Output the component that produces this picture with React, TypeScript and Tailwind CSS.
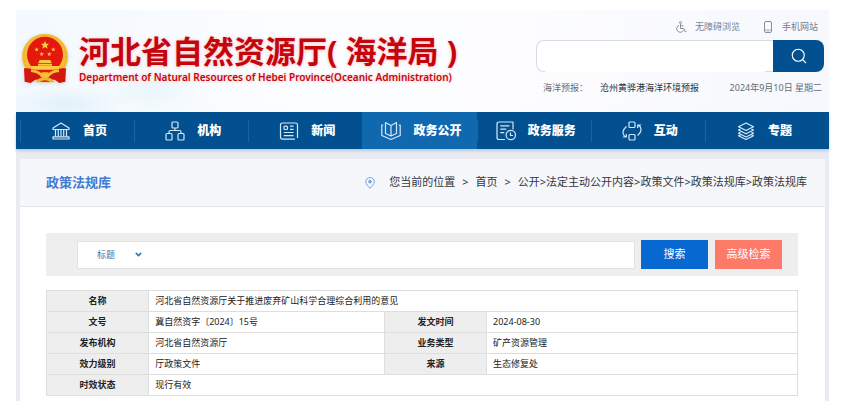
import type { ReactNode } from "react";
import { ChevronDown, Search } from "lucide-react";
import { clsx } from "clsx";

interface NavItem {
  label: string;
  icon: ReactNode;
  active?: boolean;
}

const navItems: NavItem[] = [
  {
    label: "首页",
    icon: (
      <>
        <path d="M2 8.500V7L10 2l8 5v1.500z" />
        <path d="M4.500 8.500v7M7.300 8.500v7M10 8.500v7M12.700 8.500v7M15.500 8.500v7" />
        <path d="M2 15.800h16V18H2z" />
      </>
    ),
  },
  {
    label: "机构",
    icon: (
      <>
        <rect x="7" y="1" width="6" height="6" rx="1" />
        <rect x="1" y="12.500" width="6" height="6.500" rx="1" />
        <rect x="13" y="12.500" width="6" height="6.500" rx="1" />
        <path d="M10 7v2.500M4 12.500v-1.500q0-1.500 1.500-1.500h9q1.500 0 1.500 1.500v1.500" />
      </>
    ),
  },
  {
    label: "新闻",
    icon: (
      <>
        <path d="M16 18.200H3.500Q1.500 18.200 1.500 16V4Q1.500 2 3.500 2h13q2 0 2 2V17" />
        <rect x="5" y="5.200" width="3.500" height="3.300" rx="1" />
        <path d="M11 5.200h3.500M11 8.300h3.500M4.800 11.500h9.700M4.800 14.600h9.700" />
      </>
    ),
  },
  {
    label: "政务公开",
    active: true,
    icon: (
      <>
        <path d="M10 4.500v10.500L4.500 12.500V1.500zM10 4.500l5.500-3V12.500L10 15z" />
        <path d="M2.300 4H.8v10.500L10 18.500l9.200-4V4h-1.500" />
      </>
    ),
  },
  {
    label: "政务服务",
    icon: (
      <>
        <path d="M9 18.500H3Q1 18.500 1 16.500V3Q1 1 3 1h14v7.500" />
        <path d="M4.300 4.800h9.200M4.300 8.200h6M4.300 11.600h4" />
        <circle cx="14.800" cy="14" r="4.700" />
        <path d="M14.500 11.500v3h2.500" />
      </>
    ),
  },
  {
    label: "互动",
    icon: (
      <>
        <rect x="7" y="1" width="6" height="5.500" rx="1" />
        <rect x="7" y="13.500" width="6" height="5.500" rx="1" />
        <path d="M4.500 5.500Q.8 8.500 1 12q.2 2.500 2.500 3.800M.8 16h3.500v-3" />
        <path d="M15.500 14.500q3.700-3 3.500-6.500-.2-2.500-2.500-3.800M19.200 4h-3.500v3" />
      </>
    ),
  },
  {
    label: "专题",
    icon: (
      <>
        <path d="M10 2l7.500 3.700L10 9.500 2.500 5.700z" />
        <path d="M4.500 8L2.500 9l7.500 3.800L17.500 9l-2-1M4.500 11.200l-2 1 7.500 3.800 7.500-3.800-2-1M4.500 14l-2 .8L10 18.500l7.500-3.700-2-.8" />
      </>
    ),
  },
];

const crumbs = ["公开", "法定主动公开内容", "政策文件", "政策法规库", "政策法规库"];

const records = [
  ["文号", "冀自然资字〔2024〕15号", "发文时间", "2024-08-30"],
  ["发布机构", "河北省自然资源厅", "业务类型", "矿产资源管理"],
  ["效力级别", "厅政策文件", "来源", "生态修复处"],
];

function Emblem() {
  return (
    <svg viewBox="32 36 144 156" className="h-[52px] w-12 shrink-0 drop-shadow-sm" aria-hidden="true">
      <circle cx="104" cy="107" r="69" fill="#f3bd35" />
      <circle cx="104" cy="107" r="63" fill="none" stroke="#e3a127" strokeWidth="2" strokeDasharray="5 5" />
      <circle cx="104" cy="101" r="54" fill="#e5180e" />
      <path d="M104 59l3.500 9h9l-7 6 2.500 9-8-5-8 5 2.500-9-7-6h9z" fill="#ffd04a" />
      <g fill="#f9c13f">
        <path d="M79 79l2 4h5l-4 3 1 5-4-2-4 2 1-5-4-3h5zM129 79l2 4h5l-4 3 1 5-4-2-4 2 1-5-4-3h5z" />
        <path d="M94 93l2 4h5l-4 3 1 5-4-2-4 2 1-5-4-3h5zM117 93l2 4h5l-4 3 1 5-4-2-4 2 1-5-4-3h5z" />
      </g>
      <path d="M88 117h32l4 9h-40zM83 128h42v6H83zM62 135h84v11H62z" fill="#ffc944" />
      <path d="M54 142l26 6 24 12 24-12 26-6 13 0-2 40-18 4-14-10H75l-14 10-18-4-2-40z" fill="#d3170e" />
      <path d="M62 149q20 1 33 15M146 149q-20 1-33 15" fill="none" stroke="#f5bf3a" strokeWidth="8" />
      <ellipse cx="104" cy="163" rx="14" ry="9" fill="#f5bf3a" />
      <path d="M76 184q4-12 18-14h20q14 2 18 14z" fill="#f0b535" />
      <path d="M88 182q16-9 32 0z" fill="#d3170e" />
    </svg>
  );
}

function Header() {
  return (
    <header className="flex h-[102px] items-start justify-between bg-[radial-gradient(ellipse_60px_18px_at_50px_94px,#e0f1fb,transparent),radial-gradient(ellipse_50px_24px_at_135px_80px,#e9f5fc,transparent),linear-gradient(90deg,#f3f9fe,#fcfdff_35%,#fdfdff_60%,#f6f8fd)] pl-[5px]">
      <div className="flex items-start pt-[23px]">
        <Emblem />
        <div className="ml-[10px] text-[#c4060c] [text-shadow:0_0_3px_#fbc5c8,0_1px_4px_#fde0e2]">
          <h1 className="text-[31px] leading-9 font-bold whitespace-nowrap">河北省自然资源厅( 海洋局 )</h1>
          <p className="text-[10px] leading-4 font-semibold whitespace-nowrap">
            Department of Natural Resources of Hebei Province(Oceanic Administration)
          </p>
        </div>
      </div>

      <div className="w-[293px] shrink-0 pt-2 pr-[5px]">
        <div className="flex h-[18px] items-center justify-end gap-6 pr-[6px] text-[9px] text-[#787f92]">
          <a href="#accessible" className="flex items-center gap-2">
            <svg viewBox="0 0 12 12" className="size-3" fill="none" stroke="#868c9c" aria-hidden="true">
              <circle cx="5.500" cy="1.500" r="1" />
              <path d="M5.500 2.800v4.700h3.300l1.500 3.300 1.200-.5M5.500 4.800h3M4 4.300a3.600 3.600 0 1 0 4.500 5" />
            </svg>
            无障碍浏览
          </a>
          <a href="#mobile" className="flex items-center gap-[10px]">
            <svg viewBox="0 0 8 12" className="h-3 w-2" fill="none" stroke="#868c9c" aria-hidden="true">
              <rect x=".5" y=".5" width="7" height="11" rx="1.500" />
              <path d="M.5 9h7M3.300 10.300h1.400" strokeWidth=".7" />
            </svg>
            手机网站
          </a>
        </div>
        <form className="mt-1 flex h-8">
          <div className="flex flex-1 rounded-l-lg border border-r-0 border-[#d9dce2] bg-white">
            <input
              type="search"
              aria-label="站内搜索"
              className="mr-2 -mb-px ml-2 w-full bg-white text-xs outline-none"
            />
          </div>
          <button
            type="button"
            aria-label="搜索"
            className="flex w-[51px] items-center justify-center rounded-r-lg bg-[#02508f] text-white"
          >
            <Search className="size-[18px]" strokeWidth={1.5} />
          </button>
        </form>
        <div className="mt-2 flex pr-[2px] pl-[7px] text-[9px] leading-4 text-[#666b78]">
          <span className="mr-3">海洋预报：</span>
          <a href="#forecast" className="text-[#2b2e36]">
            沧州黄骅港海洋环境预报
          </a>
          <span className="ml-auto">2024年9月10日 星期二</span>
        </div>
      </div>
    </header>
  );
}

function MainNav() {
  return (
    <nav className="relative flex h-[37px] bg-[#02508f] pr-[10px] pl-1 shadow-[0_2px_3px_#b9cae6]">
      {navItems.map((item) => (
        <a
          key={item.label}
          href="#nav"
          className={clsx(
            "flex flex-1 items-center justify-center gap-3 pl-1 text-xs font-black text-white",
            item.active
              ? "bg-[#1068ae]"
              : "bg-[linear-gradient(#1d639c,#1d639c)] bg-[length:1px_22px] bg-left bg-no-repeat",
          )}
        >
          <svg
            viewBox="0 0 20 20"
            className="size-5 shrink-0"
            fill="none"
            stroke="#d6e8f8"
            strokeWidth="1.2"
            strokeLinejoin="round"
            aria-hidden="true"
          >
            {item.icon}
          </svg>
          {item.label}
        </a>
      ))}
    </nav>
  );
}

function Breadcrumb() {
  return (
    <div className="flex items-center text-[11px] whitespace-pre text-[#33363d]">
      <svg viewBox="0 0 10 12" className="mr-[14px] h-3 w-[10px]" fill="none" stroke="#6ea3e2" aria-hidden="true">
        <path d="M5 11.300C2.500 8.500.7 6.800.7 4.700a4.300 4.100 0 0 1 8.600 0C9.300 6.800 7.500 8.500 5 11.300z" />
        <circle cx="5" cy="4.700" r="1.300" fill="#6ea3e2" />
      </svg>
      <span>您当前的位置</span>
      <span className="px-[7px]">&gt;</span>
      <a href="#home">首页</a>
      <span className="px-[7px]">&gt;</span>
      {crumbs.map((crumb, i) => (
        <span key={i}>
          {i > 0 && ">"}
          <a href="#crumb">{crumb}</a>
        </span>
      ))}
    </div>
  );
}

function SearchBar() {
  return (
    <form className="flex h-[43px] items-center bg-[#eeeeee] pr-4 pl-[31px]">
      <div className="flex h-7 flex-1 items-center border border-[#e2e2e2] bg-white pl-[19px]">
        <div className="relative flex items-center">
          <select
            aria-label="检索字段"
            className="w-[50px] appearance-none bg-transparent text-[9px] text-[#2f7ab5] outline-none"
          >
            <option>标题</option>
          </select>
          <ChevronDown className="pointer-events-none absolute right-1 size-[9px] text-[#2176b5]" strokeWidth={4} />
        </div>
        <input type="text" aria-label="关键词" className="h-full min-w-0 flex-1 text-xs outline-none" />
      </div>
      <button type="button" className="ml-[6px] h-[29px] w-[67px] bg-[#0868d2] text-[11px] text-white">
        搜索
      </button>
      <button type="button" className="ml-[7px] h-[29px] w-[67px] bg-[#fc7a67] text-[11px] text-white">
        高级检索
      </button>
    </form>
  );
}

const thClass = "border border-[#dedede] bg-[#eeeeee] text-center font-bold";
const tdClass = "border border-[#dedede] px-[6px]";

function RecordTable() {
  return (
    <table className="mt-[14px] w-full table-fixed border-collapse text-[9px] leading-5 text-[#222222]">
      <colgroup>
        <col className="w-[13.6%]" />
        <col className="w-[31.4%]" />
        <col className="w-[13.6%]" />
        <col />
      </colgroup>
      <tbody>
        <tr>
          <th scope="row" className={thClass}>名称</th>
          <td colSpan={3} className={tdClass}>
            河北省自然资源厅关于推进废弃矿山科学合理综合利用的意见
          </td>
        </tr>
        {records.map(([leftLabel, leftValue, rightLabel, rightValue]) => (
          <tr key={leftLabel}>
            <th scope="row" className={thClass}>{leftLabel}</th>
            <td className={tdClass}>{leftValue}</td>
            <th scope="row" className={thClass}>{rightLabel}</th>
            <td className={tdClass}>{rightValue}</td>
          </tr>
        ))}
        <tr>
          <th scope="row" className={thClass}>时效状态</th>
          <td colSpan={3} className={tdClass}>现行有效</td>
        </tr>
      </tbody>
    </table>
  );
}

export default function App() {
  return (
    <div className="bg-white pt-[10px] pr-[15px] pb-[14px] pl-4 font-['Noto_Sans','Noto_Sans_CJK_SC',sans-serif]">
      <Header />
      <MainNav />
      <main className="bg-[#eaebf0] px-1 pt-[10px]">
        <section className="bg-white">
          <div className="flex h-12 items-center justify-between border-b border-[#e3e4e8] bg-[#f6f7fa] pr-[18px] pl-[26px]">
            <h2 className="text-[13px] font-bold text-[#447bd0]">政策法规库</h2>
            <Breadcrumb />
          </div>
          <div className="pt-[26px] pr-[27px] pb-[5px] pl-[26px]">
            <SearchBar />
            <RecordTable />
          </div>
        </section>
      </main>
    </div>
  );
}
